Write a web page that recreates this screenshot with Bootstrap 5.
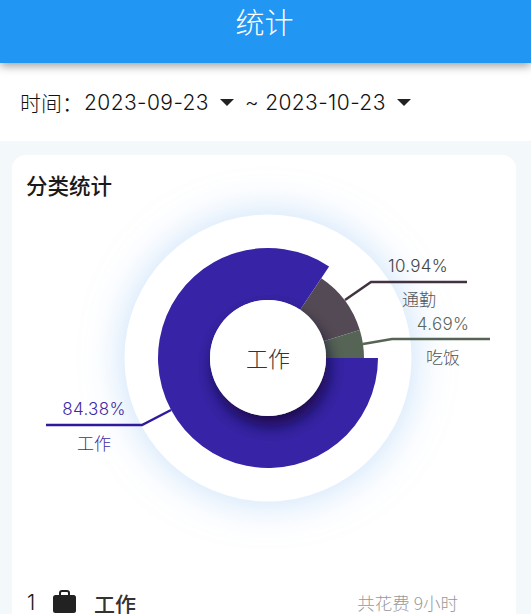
<!DOCTYPE html>
<html lang="zh">
<head>
<meta charset="utf-8">
<title>统计</title>
<link href="https://cdn.jsdelivr.net/npm/bootstrap@5.3.0/dist/css/bootstrap.min.css" rel="stylesheet">
<style>
html,body{height:614px;overflow:hidden}
body{background:#f3f8fa;font-family:"Inter","Noto Sans CJK SC",sans-serif;color:#222}
.app-head{height:63px;background:#2196f3;color:#fff;font-size:29px;line-height:48px;font-weight:300;box-shadow:0 3px 9px rgba(0,0,0,.38);position:relative;z-index:2;padding-right:6px;text-indent:4px}
.filter-row{height:78px;background:#fff;padding-left:20px;font-size:21px;color:#111;font-weight:300;padding-top:1px;letter-spacing:.4px}
.cjk-lbl{font-family:"Noto Sans CJK SC",sans-serif;font-weight:300;letter-spacing:0;margin-right:1px}
.tri{display:inline-block;width:0;height:0;border-left:7px solid transparent;border-right:7px solid transparent;border-top:7px solid #222;margin:0 11px 0 11px}
.tilde{margin-right:6px}
.stat-card{background:#fff;border-radius:14px;margin:14px 15px 0 12px;height:600px;padding:15px}
.stat-title{font-family:"Noto Sans CJK SC",sans-serif;font-size:21.5px;font-weight:500;color:#1a1a1a;line-height:32px;margin-left:-1px;margin-top:-1px}
.chart-box{height:367px;margin:14px -15px 0}
.chart-box svg{display:block;overflow:visible}
.chart-box text{font-family:"Inter","Noto Sans CJK SC",sans-serif;font-weight:300}
.rank-row{font-size:21px;line-height:18px;margin-top:12px;font-family:"Noto Sans CJK SC",sans-serif}
.rank-row svg{margin-top:-4px}
.rank-name{font-weight:500;color:#333;margin-left:18px}
.rank-no{width:26px;font-weight:300;color:#1c1c1c;font-family:"Inter",sans-serif}
.rank-cost{font-size:17.5px;color:#999;font-weight:300;margin-right:43px}
</style>
</head>
<body>
<header class="app-head text-center">统计</header>
<section class="filter-row d-flex align-items-center">
  <span class="cjk-lbl">时间：</span><span>2023-09-23</span><span class="tri"></span><span class="tilde">~</span><span>2023-10-23</span><span class="tri"></span>
</section>
<main class="stat-card">
  <div class="stat-title">分类统计</div>
  <div class="chart-box">
    <svg width="504" height="320" viewBox="12 215 504 320" xmlns="http://www.w3.org/2000/svg">
      <defs>
        <filter id="glow" x="-30%" y="-30%" width="160%" height="160%"><feDropShadow dx="0" dy="0" stdDeviation="20" flood-color="#9cc9f5" flood-opacity=".6"/></filter>
        <filter id="hole" x="-60%" y="-60%" width="220%" height="220%"><feDropShadow dx="3" dy="10" stdDeviation="8" flood-color="#0a0528" flood-opacity=".72"/></filter>
      </defs>
      <circle cx="268" cy="358" r="143.5" fill="#fff" filter="url(#glow)"/>
      <path d="M378 358A110 110 0 1 1 329.1 266.5L300.2 309.8A58 58 0 1 0 326 358Z" fill="#3623a6"/>
      <path d="M321.3 278.2A96 96 0 0 1 359.8 330.1L323.5 341.2A58 58 0 0 0 300.2 309.8Z" fill="#544a55"/>
      <path d="M359.8 330.1A96 96 0 0 1 364 358L326 358A58 58 0 0 0 323.5 341.2Z" fill="#566456"/>
      <circle cx="268" cy="358" r="58" fill="#fff" filter="url(#hole)"/>
      <text x="268" y="367" text-anchor="middle" font-size="22" fill="#333">工作</text>
      <path d="M345 300L371 282H467" fill="none" stroke="#41333f" stroke-width="2.5"/>
      <text x="418" y="272" text-anchor="middle" font-size="17" letter-spacing=".3" fill="#444">10.94%</text>
      <text x="419" y="306" text-anchor="middle" font-size="17" fill="#555">通勤</text>
      <path d="M363 344L392 339H490" fill="none" stroke="#566456" stroke-width="2.5"/>
      <text x="443" y="330" text-anchor="middle" font-size="17" letter-spacing=".3" fill="#5b665c">4.69%</text>
      <text x="443" y="364" text-anchor="middle" font-size="17" fill="#555">吃饭</text>
      <path d="M171 410L142 425H46" fill="none" stroke="#2f1a9e" stroke-width="2.5"/>
      <text x="94" y="415" text-anchor="middle" font-size="17" letter-spacing=".3" fill="#3d2ba6">84.38%</text>
      <text x="94" y="450" text-anchor="middle" font-size="17" fill="#3d2ba6">工作</text>
    </svg>
  </div>
  <div class="rank-row d-flex align-items-start">
    <span class="rank-no">1</span>
    <svg width="23" height="23" viewBox="0 0 23 23" xmlns="http://www.w3.org/2000/svg"><path d="M7 6V3a2 2 0 0 1 2-2h5a2 2 0 0 1 2 2v3" fill="none" stroke="#222" stroke-width="2"/><rect y="5" width="23" height="18" rx="2.5" fill="#222"/></svg>
    <span class="rank-name">工作</span>
    <span class="rank-cost ms-auto">共花费 9小时</span>
  </div>
</main>
</body>
</html>
